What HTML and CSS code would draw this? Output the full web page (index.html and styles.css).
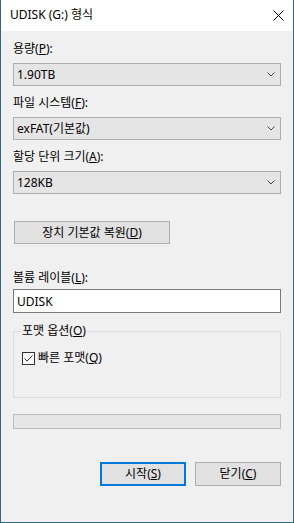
FILE: index.html
```html
<!DOCTYPE html>
<html lang="ko">
<head>
    <meta charset="UTF-8">
    <meta name="viewport" content="width=device-width, initial-scale=1.0">
    <title>UDISK (G:) 형식</title>
    <link rel="stylesheet" href="styles.css">
</head>
<body>
    <div class="window">
        <!-- 제목 표시줄 -->
        <div class="titlebar">
            <span class="title">UDISK (G:) 형식</span>
            <svg class="close" width="11" height="11" viewBox="0 0 11 11">
                <path d="M0.5 0.5 L10.5 10.5 M10.5 0.5 L0.5 10.5" stroke="#000" stroke-width="1" fill="none"/>
            </svg>
        </div>

        <div class="content">
            <div class="label first">용량(<u>P</u>):</div>
            <div class="combo">
                <span>1.90TB</span>
                <svg class="arrow" width="8" height="5" viewBox="0 0 8 5"><path d="M0.5 0.5 L4 4 L7.5 0.5" stroke="#444" fill="none"/></svg>
            </div>

            <div class="label">파일 시스템(<u>F</u>):</div>
            <div class="combo">
                <span>exFAT(기본값)</span>
                <svg class="arrow" width="8" height="5" viewBox="0 0 8 5"><path d="M0.5 0.5 L4 4 L7.5 0.5" stroke="#444" fill="none"/></svg>
            </div>

            <div class="label">할당 단위 크기(<u>A</u>):</div>
            <div class="combo">
                <span>128KB</span>
                <svg class="arrow" width="8" height="5" viewBox="0 0 8 5"><path d="M0.5 0.5 L4 4 L7.5 0.5" stroke="#444" fill="none"/></svg>
            </div>

            <button class="btn restore">장치 기본값 복원(<u>D</u>)</button>

            <div class="label volume">볼륨 레이블(<u>L</u>):</div>
            <input class="textbox" type="text" value="UDISK">

            <fieldset class="group">
                <legend>포맷 옵션(<u>O</u>)</legend>
                <label class="check-row">
                    <span class="checkbox">
                        <svg width="11" height="11" viewBox="0 0 11 11"><path d="M1.5 5.5 L4 8 L9.5 2.5" stroke="#333" stroke-width="1" fill="none"/></svg>
                    </span>
                    빠른 포맷(<u>Q</u>)
                </label>
            </fieldset>

            <div class="progress"></div>

            <div class="actions">
                <button class="btn action default">시작(<u>S</u>)</button>
                <button class="btn action">닫기(<u>C</u>)</button>
            </div>
        </div>
    </div>
</body>
</html>
```

FILE: styles.css
```css
* { box-sizing: border-box; }
body { margin: 0; font-family: "Noto Sans", "Noto Sans CJK KR", sans-serif; font-size: 12px; color: #000; background: #f0f0f0; }
u { text-decoration: underline; text-underline-offset: 1px; }

.window { width: 294px; height: 523px; background: #f0f0f0; border: 1px solid #2f6680; border-top: none; }
.titlebar { height: 31px; background: #fff; display: flex; align-items: center; justify-content: space-between; padding: 0 9px 1px 9px; }
.title { font-size: 12px; line-height: 16px; }
.close { margin-right: 0; }

.content { display: flex; flex-direction: column; padding: 0 12px; }
.label { line-height: 16px; margin-top: 9px; }
.label.first { margin-top: 10px; }
.combo { margin-top: 6px; height: 23px; background: #e5e5e5; border: 1px solid #adadad; display: flex; align-items: center; justify-content: space-between; padding: 0 5px 0 3px; line-height: 16px; }
.arrow { display: block; }

.btn { font-family: inherit; font-size: 12px; color: #000; background: #e1e1e1; border: 1px solid #adadad; padding: 0; line-height: 16px; }
.restore { margin-top: 27px; width: 156px; height: 23px; margin-left: 1px; }
.label.volume { margin-top: 26px; }
.textbox { margin-top: 3px; height: 24px; border: 1px solid #7a7a7a; background: #fff; font-family: inherit; font-size: 12px; padding: 0 3px; outline: none; width: 100%; }

.group { margin: 10px 0 0; border: 1px solid #dcdcdc; padding: 0 0 31px 7px; min-width: 0; }
.group legend { padding: 0 1px; line-height: 16px; }
.check-row { display: flex; align-items: center; margin-top: 11px; margin-left: 1px; line-height: 16px; }
.checkbox { width: 13px; height: 13px; border: 1px solid #333; background: #fff; margin-right: 3px; display: flex; align-items: center; justify-content: center; }
.checkbox svg { display: block; }

.progress { margin-top: 16px; height: 15px; background: #e6e6e6; border: 1px solid #bcbcbc; }

.actions { display: flex; justify-content: flex-end; gap: 9px; margin-top: 33px; }
.action { width: 86px; height: 24px; }
.action.default { border: 2px solid #0078d7; }
```
